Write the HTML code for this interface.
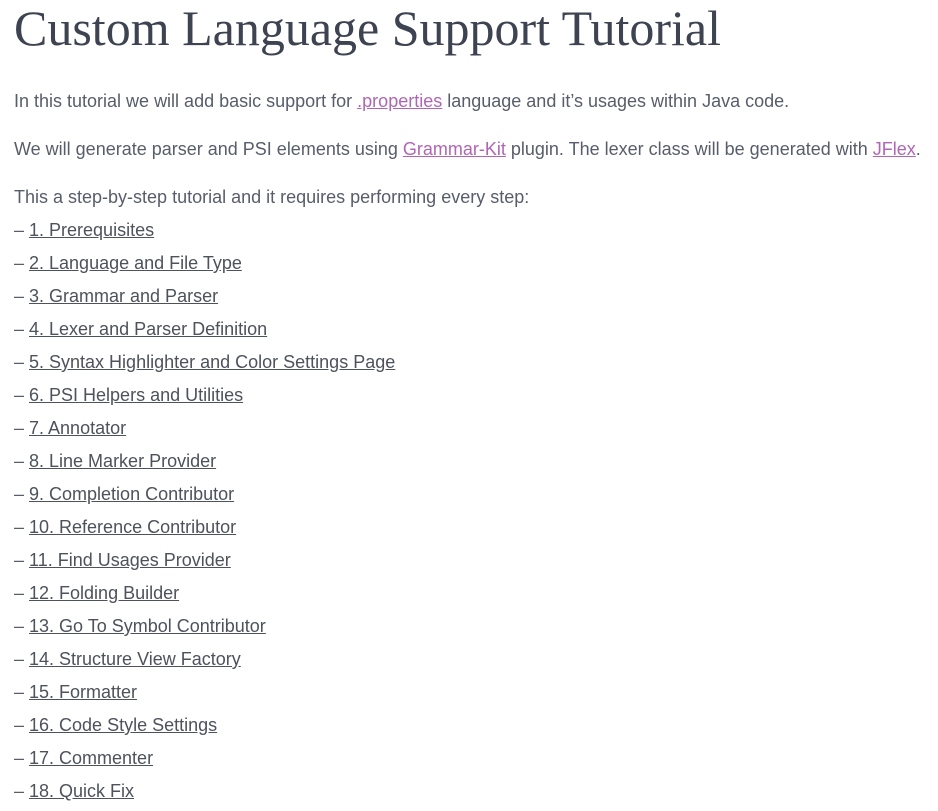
<!DOCTYPE html>
<html><head><meta charset="utf-8"><style>
body{margin:0;background:#fff;width:938px;height:811px;overflow:hidden;}
.w{padding-left:14px;font-family:"Liberation Sans",sans-serif;color:#575d6a;font-size:18px;}
h1{font-family:"Liberation Serif",serif;font-weight:normal;font-size:50px;color:#3d4350;margin:0;position:absolute;left:14px;top:-2px;line-height:60px;white-space:nowrap;}
.p{position:absolute;left:14px;line-height:22px;white-space:nowrap;}
a.pu{color:#b165b5;text-decoration:underline;}
.l{position:absolute;left:14px;line-height:22px;white-space:nowrap;}
.l a{color:#4d525b;text-decoration:underline;}
</style></head><body><div class="w">
<h1>Custom Language Support Tutorial</h1>
<div class="p" style="top:90px">In this tutorial we will add basic support for <a class="pu">.properties</a> language and it’s usages within Java code.</div>
<div class="p" style="top:138px">We will generate parser and PSI elements using <a class="pu">Grammar-Kit</a> plugin. The lexer class will be generated with <a class="pu">JFlex</a>.</div>
<div class="p" style="top:186px">This a step-by-step tutorial and it requires performing every step:</div>
<div class="l" style="top:219px">– <a>1. Prerequisites</a></div>
<div class="l" style="top:252px">– <a>2. Language and File Type</a></div>
<div class="l" style="top:285px">– <a>3. Grammar and Parser</a></div>
<div class="l" style="top:318px">– <a>4. Lexer and Parser Definition</a></div>
<div class="l" style="top:351px">– <a>5. Syntax Highlighter and Color Settings Page</a></div>
<div class="l" style="top:384px">– <a>6. PSI Helpers and Utilities</a></div>
<div class="l" style="top:417px">– <a>7. Annotator</a></div>
<div class="l" style="top:450px">– <a>8. Line Marker Provider</a></div>
<div class="l" style="top:483px">– <a>9. Completion Contributor</a></div>
<div class="l" style="top:516px">– <a>10. Reference Contributor</a></div>
<div class="l" style="top:549px">– <a>11. Find Usages Provider</a></div>
<div class="l" style="top:582px">– <a>12. Folding Builder</a></div>
<div class="l" style="top:615px">– <a>13. Go To Symbol Contributor</a></div>
<div class="l" style="top:648px">– <a>14. Structure View Factory</a></div>
<div class="l" style="top:681px">– <a>15. Formatter</a></div>
<div class="l" style="top:714px">– <a>16. Code Style Settings</a></div>
<div class="l" style="top:747px">– <a>17. Commenter</a></div>
<div class="l" style="top:780px">– <a>18. Quick Fix</a></div>
</div></body></html>
